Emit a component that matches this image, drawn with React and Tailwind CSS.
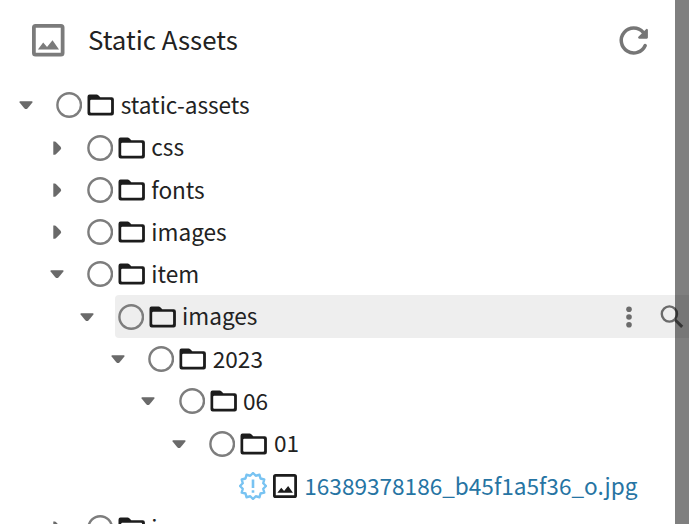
const DEPTHS = ['pl-0', 'pl-[30.6px]', 'pl-[61.4px]', 'pl-[92.1px]', 'pl-[122.4px]', 'pl-[153.2px]', 'pl-[183.6px]'];

const ROWS = [
  { depth: 0, label: 'static-assets', open: true },
  { depth: 1, label: 'css' },
  { depth: 1, label: 'fonts' },
  { depth: 1, label: 'images' },
  { depth: 1, label: 'item', open: true },
  { depth: 2, label: 'images', open: true, active: true },
  { depth: 3, label: '2023', open: true },
  { depth: 4, label: '06', open: true },
  { depth: 5, label: '01', open: true },
  { depth: 6, label: '16389378186_b45f1a5f36_o.jpg', file: true },
  { depth: 1, label: 'images' },
];

function Arrow({ open }) {
  return (
    <svg className="size-5 shrink-0 text-[#6a6a6a]" viewBox="0 0 20 20" fill="currentColor">
      {open ? (
        <path d="M4.200 6.200h11.600q1.100.1.600 1.300L11.700 13.200q-1.700 1.700-3.400 0L3.600 7.500Q3.100 6.300 4.200 6.200Z" />
      ) : (
        <path d="M6.300 3.600h1.300q1 .1 1.800 1L13.600 8.800q1.200 1.400 0 2.800L9.400 15.800q-.8.9-1.800 1H6.300Z" />
      )}
    </svg>
  );
}

function Circle() {
  return (
    <svg className="size-[26px] shrink-0" viewBox="0 0 26 26" fill="none" stroke="#7d7d7d" strokeWidth="2.400">
      <circle cx="13.2" cy="13" r="11.8" />
    </svg>
  );
}

function Folder() {
  return (
    <svg className="h-[22px] w-[27px] shrink-0" viewBox="0 0 27 22" fill="#1c1c1c">
      <path
        fillRule="evenodd"
        d="M2.500.6H9.600q1 0 1.700.7L13.300 3.300H24.700q2.200 0 2.200 2.200V19.200q0 2.200-2.200 2.200H2.700Q.5 21.400 .5 19.200V2.800Q.5.6 2.500.6ZM4.200 5.800q-1 0-1 1V17.700q0 1 1 1H23.100q1 0 1-1V6.800q0-1-1-1Z"
      />
    </svg>
  );
}

function Picture({ className }) {
  return (
    <svg className={className} viewBox="0 0 32 32" fill="currentColor">
      <path fillRule="evenodd" d="M3.500 0h25Q32 0 32 3.500v25q0 3.500-3.500 3.500h-25Q0 32 0 28.500v-25Q0 0 3.500 0ZM3.700 3.700v24.600h24.600v-24.600Z" />
      <path d="M5.800 25 11 18.200l3.800 4.400 5.400-6.600L26.600 25Z" />
    </svg>
  );
}

const SEAL = Array.from({ length: 24 }, (_, i) => {
  const r = i % 2 ? 10.6 : 13;
  const a = (i * Math.PI) / 12;
  return `${14 + r * Math.sin(a)},${14 - r * Math.cos(a)}`;
}).join(' ');

function NewBadge() {
  return (
    <svg className="-mx-px size-7 shrink-0" viewBox="0 0 28 28" fill="none" stroke="#78c3f2" strokeWidth="2.400">
      <polygon points={SEAL} strokeLinejoin="round" />
      <path d="M14 7.500v8.500M14 18.300v2.500" strokeWidth="2.600" />
    </svg>
  );
}

function Row({ depth, label, open, active, file }) {
  return (
    <div className={`flex h-[42.3px] shrink-0 ${DEPTHS[depth]}`}>
      <div className="flex w-[53.6px] shrink-0 items-center pl-4">{!file && <Arrow open={open} />}</div>
      <div className={`flex min-w-0 flex-1 items-center rounded-l-sm pl-[2.6px] ${active ? '-mt-px bg-[#eeeeee] pt-px' : ''}`}>
        {file ? <NewBadge /> : <Circle />}
        <div className="ml-[5px] flex w-[27px] shrink-0 justify-center">
          {file ? <Picture className="ml-px size-6 text-[#1c1c1c]" /> : <Folder />}
        </div>
        <span className={`ml-[6.500px] whitespace-nowrap text-[22.6px] leading-none ${file ? 'text-[#2674a3]' : 'text-[#222]'}`}>
          {label}
        </span>
        {active && (
          <div className="ml-auto flex items-center gap-[28px] pr-[5px]">
            <svg className="h-6 w-[6px] text-[#6b6b6b]" viewBox="0 0 6 24" fill="currentColor">
              <circle cx="3" cy="4.200" r="2.800" />
              <circle cx="3" cy="12" r="2.800" />
              <circle cx="3" cy="19.800" r="2.800" />
            </svg>
            <svg className="size-6" viewBox="0 0 24 24" fill="none" stroke="#6b6b6b">
              <circle cx="9.400" cy="9" r="7.600" strokeWidth="2.400" />
              <path d="m15 14.700 7.200 7.200" strokeWidth="3" />
            </svg>
          </div>
        )}
      </div>
    </div>
  );
}

export default function App() {
  return (
    <div className="relative flex h-[524px] w-[689px] flex-col overflow-hidden bg-white font-['Noto_Sans_CJK_SC','Noto_Sans',sans-serif]">
      <header className="flex h-[84.1px] shrink-0 items-center pr-[39px] pb-[3px] pl-8">
        <Picture className="size-[32.500px] text-[#7b7b7b]" />
        <h1 className="ml-[23.5px] pb-[3px] text-[25.8px] leading-none text-[#222]">Static Assets</h1>
        <svg className="ml-auto size-8" viewBox="0 0 32 32" fill="none" stroke="#767676" strokeWidth="3.500" strokeLinecap="round">
          <path d="M27.200 20.500A12.500 12.500 0 1 1 25.200 7.300" />
          <path d="M28.800 5v7.600h-7.600Z" fill="#767676" strokeWidth="2.200" strokeLinejoin="round" />
        </svg>
      </header>
      <main className="flex flex-col">
        {ROWS.map((row, i) => (
          <Row key={i} {...row} />
        ))}
      </main>
      <div className="absolute inset-y-0 right-0 w-[14px] bg-black/50" />
    </div>
  );
}
